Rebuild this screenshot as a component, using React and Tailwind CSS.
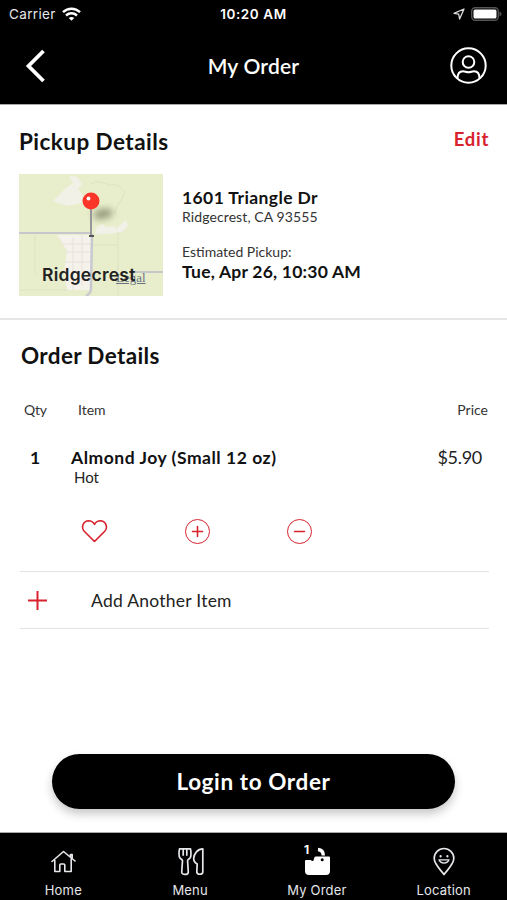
import { Plus, Minus } from "lucide-react";

const TABS = [
  { label: "Home", icon: HomeIcon },
  { label: "Menu", icon: MenuIcon },
  { label: "My Order", icon: BagIcon },
  { label: "Location", icon: LocationIcon },
];

function HomeIcon() {
  return (
    <svg width="26" height="32" viewBox="0 0 26 32" fill="none" stroke="currentColor" strokeWidth="1.6" strokeLinejoin="round" strokeLinecap="round">
      <path d="M2 15.5 13.500 5.500l11.500 9.500M4.800 14V25.500h5v-6.500q0-1 1-1h3q1 0 1 1V25.500h6.400V13M20.500 10.500V8.500h1.700v3.500" />
    </svg>
  );
}

function MenuIcon() {
  return (
    <svg width="28" height="32" viewBox="0 0 28 32" fill="none" stroke="currentColor" strokeWidth="1.7" strokeLinejoin="round">
      <path d="M3.500 2.800h11c.6 3.300 1 6.500-.3 8.900-.9 1.500-2.600 1.800-2.600 3l.7 11.500c0 3-6.600 3-6.600 0l.8-11.500c0-1.200-1.800-1.500-2.700-3C2.500 9.300 2.900 6.100 3.500 2.800Z" />
      <path d="M7.200 2.800v7M10.800 2.800v7" />
      <path d="M26.800 2.800V26c0 3-6 3-6 0l.4-8c-2.700-1.500-3.700-3-3.500-5.700.3-4.600 3.900-9.500 9.100-9.500Z" />
    </svg>
  );
}

function BagIcon() {
  return (
    <div className="relative">
      <svg width="26" height="32" viewBox="0 0 26 32">
        <path
          d="M1 15q0-1 1-1h5l1 .8 1.500-.8 1-2.700q.4-.8 1.300-.8h13.200q1 0 1 1V25q0 4-4 4H5q-4 0-4-4Z"
          fill="#fff"
        />
        <path d="M14 3.500c3.500.3 5.300 2.500 5.300 6" fill="none" stroke="#fff" strokeWidth="3.500" />
        <circle cx="18.200" cy="13.800" r="1.500" fill="#000" />
        <circle cx="8.500" cy="14" r="1.100" fill="#000" />
      </svg>
      <span className="absolute -top-[3px] left-0 font-['Inter',sans-serif] text-[12px] leading-[14px] font-bold text-white">1</span>
    </div>
  );
}

function LocationIcon() {
  return (
    <svg width="24" height="32" viewBox="0 0 24 32" fill="none" stroke="currentColor" strokeWidth="1.7" strokeLinejoin="round" strokeLinecap="round">
      <path d="M12 28.500C8.500 23.500 2.200 18.500 2.200 12.300a9.800 9.800 0 0 1 19.600 0C21.800 18.500 15.500 23.500 12 28.500Z" />
      <path d="M7 13.800c1.500 4.300 8.500 4.300 10 0Z" strokeWidth="1.300" />
      <path d="M8.600 10.200v.2M15.400 10.200v.2" strokeWidth="2.200" />
    </svg>
  );
}

function StatusBar() {
  return (
    <div className="grid h-7 grid-cols-3 items-center pr-[5px] pl-[9px] font-['Inter',sans-serif]">
      <div className="flex items-center gap-1.5 text-[13.5px] tracking-[0.35px] text-gray-200">
        Carrier
        <svg width="19" height="14" viewBox="0 0 19 14" fill="none" stroke="#fff" strokeWidth="2.500">
          <path d="M1 5.200c4.800-4.600 12.200-4.600 17 0M4 8.500c3.200-2.900 7.800-2.900 11 0" />
          <path d="M6.700 11c1.700-1.500 3.900-1.500 5.600 0L9.500 13.800Z" fill="#fff" stroke="none" />
        </svg>
      </div>
      <div className="-ml-1 text-center text-[13.5px] font-semibold tracking-[0.6px] whitespace-nowrap">10:20 AM</div>
      <div className="flex items-center justify-end gap-1.5">
        <svg width="12" height="12" viewBox="0 0 12 12" fill="none" stroke="#ddd" strokeWidth="1.300" strokeLinejoin="round">
          <path d="M11 1 1 5.300l4.700.9.900 4.800Z" />
        </svg>
        <svg width="31" height="14" viewBox="0 0 31 14">
          <rect x=".7" y=".7" width="26.600" height="12.600" rx="3.500" fill="none" stroke="#555" strokeWidth="1.400" />
          <rect x="2.500" y="2.500" width="23" height="9" rx="1.500" fill="#fff" />
          <path d="M28.500 4.500q2 .7 2 2.500t-2 2.500Z" fill="#555" />
        </svg>
      </div>
    </div>
  );
}

function Header() {
  return (
    <header className="h-[105px] border-b border-[#aaa] bg-black text-white">
      <StatusBar />
      <div className="grid h-[75px] grid-cols-3 items-center pr-5 pl-[25px]">
        <svg width="21" height="34" viewBox="0 0 21 34" fill="none" stroke="currentColor" strokeWidth="3.800">
          <path d="M18.500 2 3.500 17l15 15" />
        </svg>
        <h1 className="-ml-[5px] text-center text-[21px] font-semibold tracking-[0.2px] whitespace-nowrap">My Order</h1>
        <svg className="justify-self-end" width="37" height="37" viewBox="0 0 37 37" fill="none" stroke="currentColor" strokeWidth="2">
          <circle cx="18.500" cy="18.500" r="17.200" />
          <circle cx="18.500" cy="15" r="5.800" />
          <path d="M7.500 31.500c0-5 2-7.300 5.500-7.300 2 0 3.200 1 5.500 1s3.500-1 5.500-1c3.500 0 5.500 2.300 5.500 7.300" />
        </svg>
      </div>
    </header>
  );
}

function PickupMap() {
  return (
    <div className="relative h-[122px] w-[144px] overflow-hidden">
      <svg width="144" height="122" viewBox="0 0 144 122">
        <defs>
          <filter id="soft" x="-50%" y="-50%" width="200%" height="200%">
            <feGaussianBlur stdDeviation="3.500" />
          </filter>
        </defs>
        <rect width="144" height="122" fill="#e8eecb" />
        <path d="m34 27 13-13 7-5-4-7 8 1 5 7-4 5 5 6-1 8-14 3-7-2Z" fill="#f1f1e8" />
        <path d="M38 61h35v55H48l-3-17 3-22-7-12Z" fill="#f4f2ea" />
        <path d="m76 60 1-6 6-4 5 3 8-1 1 3 5-5 5-4 2 6-6 6-13 2Z" fill="#f1f1e8" />
        <path d="M72 10c10-6 15 2 22 1s8 4 12 7c-3 9-9 13-10 22M99 58v64M16 61v39M0 116h48M74 71h25" fill="none" stroke="#dce1c5" />
        <path d="M54 63v53M63 61v50M41 70h32M46 78h27M46 88h27" stroke="#e9e2dd" />
        <path d="M0 59h72M110 98h34" stroke="#c5c7cc" strokeWidth="2" />
        <path d="M73 60l-1 55q0 4-5 7" fill="none" stroke="#c8c8d0" strokeWidth="2.500" />
        <ellipse cx="84" cy="40" rx="10" ry="5" transform="rotate(-10 84 40)" fill="#777c60" opacity=".75" filter="url(#soft)" />
        <path d="M72 34v27" stroke="#97979b" strokeWidth="2" />
        <path d="M70 62h5" stroke="#555" strokeWidth="2" />
        <circle cx="72" cy="27" r="8.500" fill="#fb3528" />
        <circle cx="69.500" cy="24.500" r="1.900" fill="#fff" />
      </svg>
      <span className="absolute top-[97px] left-[97px] font-['Liberation_Serif',serif] text-[13px] leading-[13px] text-gray-500 underline">
        Legal
      </span>
      <span className="absolute top-[90px] left-[23px] font-['Inter',sans-serif] text-[17.5px] leading-[22px] font-semibold tracking-[0.25px] text-[#222]">
        Ridgecrest
      </span>
    </div>
  );
}

function PickupDetails() {
  return (
    <section className="h-[215px] border-b-2 border-[#e6e6e6] px-5 pt-[23px]">
      <div className="flex items-start justify-between">
        <h2 className="-ml-px text-[22.5px] leading-7 font-bold tracking-[0.45px]">Pickup Details</h2>
        <button className="-mt-px -mr-[2px] text-[18.5px] leading-6 font-bold tracking-[0.7px] text-[#d8232e]">Edit</button>
      </div>
      <div className="-ml-px mt-[18px] flex gap-[19px]">
        <PickupMap />
        <div className="pt-[13px]">
          <p className="text-[17.5px] leading-[22px] font-bold tracking-[0.4px]">1601 Triangle Dr</p>
          <p className="text-[14px] leading-4 tracking-[0.1px] text-[#333]">Ridgecrest, CA 93555</p>
          <p className="mt-[19px] text-[14px] leading-4 text-[#333]">Estimated Pickup:</p>
          <p className="text-[17.5px] leading-[23px] font-bold tracking-[0.22px]">Tue, Apr 26, 10:30 AM</p>
        </div>
      </div>
    </section>
  );
}

function OrderDetails() {
  return (
    <section className="h-[434px] pt-[22px] pr-[18px] pl-5">
      <h2 className="ml-px text-[22.5px] leading-7 font-bold tracking-[0.35px]">Order Details</h2>
      <div className="mt-8 flex pr-px pl-1 text-[14px] leading-4 text-[#333]">
        <span className="w-[54px] tracking-[-0.2px]">Qty</span>
        <span className="flex-1">Item</span>
        <span>Price</span>
      </div>
      <div className="mt-[29px] flex pr-[7px] pl-2.5 text-[17.5px] leading-[22px]">
        <span className="w-[41px] font-bold">1</span>
        <div className="flex-1">
          <p className="font-bold tracking-[0.53px]">Almond Joy (Small 12 oz)</p>
          <p className="pl-[3px] text-[15px] leading-[17px] text-[#222]">Hot</p>
        </div>
        <span className="-mt-px text-[18px] tracking-[-0.3px] text-[#222]">$5.90</span>
      </div>
      <div className="mt-8 flex gap-[77px] pl-[61px] text-[#d8232e]">
        <button aria-label="Favorite">
          <svg width="27" height="26" viewBox="0 0 27 26" fill="none" stroke="currentColor" strokeWidth="1.600" strokeLinejoin="round">
            <path d="M13.500 23.500 3 13C0 9.500 2 3 7.500 2.800c2.700 0 4.800 1.400 6 3.500 1.200-2.100 3.300-3.500 6-3.500C25 3 27 9.500 24 13Z" />
          </svg>
        </button>
        <button aria-label="Add one" className="mt-px flex size-[25px] items-center justify-center rounded-full border-[1.5px] border-current">
          <Plus size={17} strokeWidth={2.2} />
        </button>
        <button aria-label="Remove one" className="mt-px flex size-[25px] items-center justify-center rounded-full border-[1.5px] border-current">
          <Minus size={17} strokeWidth={2.2} />
        </button>
      </div>
      <button className="mt-[27px] flex h-[58px] w-full items-center border-y border-[#e2e2e2] pl-2 text-left text-[17.5px]">
        <svg width="19" height="19" viewBox="0 0 19 19" stroke="#d8232e" strokeWidth="2">
          <path d="M9.500 0v19M0 9.500h19" />
        </svg>
        <span className="ml-11 pt-0.5 tracking-[0.25px] text-[#222]">Add Another Item</span>
      </button>
    </section>
  );
}

function TabBar() {
  return (
    <nav className="grid h-[68px] grid-cols-4 border-t border-[#aaa] bg-black pt-[13px] text-gray-200">
      {TABS.map(({ label, icon: Icon }) => (
        <button key={label} className="flex flex-col items-center">
          <Icon />
          <span className="mt-1 font-['Inter',sans-serif] text-[13px] leading-4 tracking-[0.2px]">{label}</span>
        </button>
      ))}
    </nav>
  );
}

export default function App() {
  return (
    <div className="flex h-[900px] w-[507px] flex-col overflow-hidden bg-white font-['Lato',sans-serif] text-[#111]">
      <Header />
      <PickupDetails />
      <OrderDetails />
      <div className="flex flex-1 items-start px-[52px]">
        <button className="h-[55px] w-[404px] rounded-full bg-black text-[22.5px] font-bold tracking-[0.6px] text-white shadow-[0_5px_10px_rgba(0,0,0,0.22)]">
          Login to Order
        </button>
      </div>
      <TabBar />
    </div>
  );
}
